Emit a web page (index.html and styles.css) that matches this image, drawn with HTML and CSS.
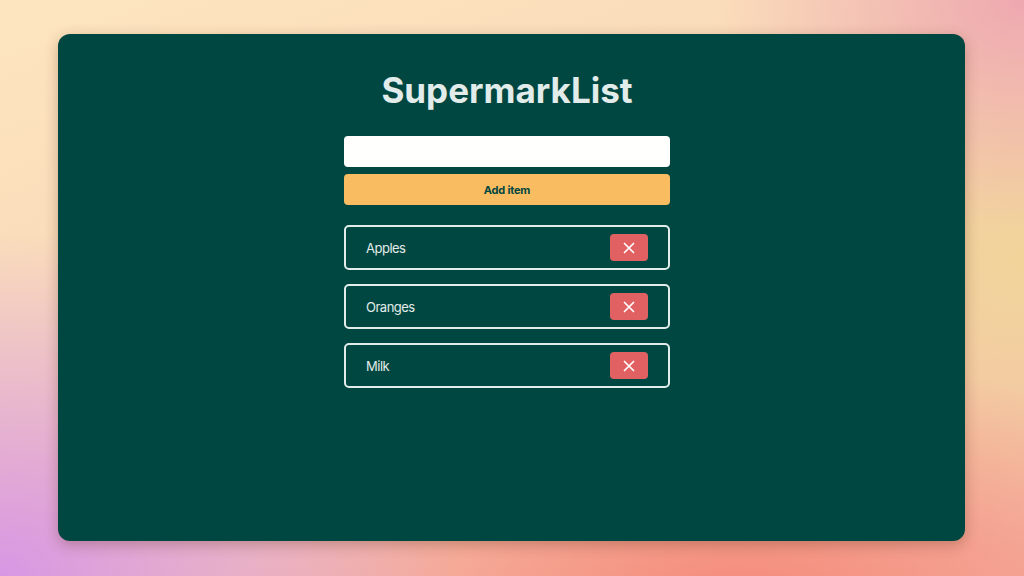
FILE: index.html
```html
<!DOCTYPE html>
<html lang="en">
<head>
<meta charset="utf-8">
<title>SupermarkList</title>
<link rel="stylesheet" href="styles.css">
</head>
<body>
<main class="card">
  <h1 class="title">SupermarkList</h1>
  <form class="add-form">
    <input class="add-input" type="text" aria-label="Item">
    <button class="add-btn" type="button">Add item</button>
  </form>
  <ul class="list">
    <li class="item"><span class="item-name">Apples</span><button class="del-btn" type="button" aria-label="Delete"><svg viewBox="0 0 12 12" width="12" height="12"><path d="M1.5 1.5L10.5 10.5M10.5 1.5L1.5 10.5" stroke="#fff" stroke-width="1.7" stroke-linecap="round"/></svg></button></li>
    <li class="item"><span class="item-name">Oranges</span><button class="del-btn" type="button" aria-label="Delete"><svg viewBox="0 0 12 12" width="12" height="12"><path d="M1.5 1.5L10.5 10.5M10.5 1.5L1.5 10.5" stroke="#fff" stroke-width="1.7" stroke-linecap="round"/></svg></button></li>
    <li class="item"><span class="item-name">Milk</span><button class="del-btn" type="button" aria-label="Delete"><svg viewBox="0 0 12 12" width="12" height="12"><path d="M1.5 1.5L10.5 10.5M10.5 1.5L1.5 10.5" stroke="#fff" stroke-width="1.7" stroke-linecap="round"/></svg></button></li>
  </ul>
</main>
</body>
</html>
```

FILE: styles.css
```css
* { box-sizing: border-box; }
html, body { height: 100%; }
body {
  margin: 0;
  padding: 34px 59px 35px 58px;
  font-family: Inter, "Noto Sans", sans-serif;
  background:
    radial-gradient(ellipse 45% 60% at 0% 100%, #d897e4 0%, rgba(216,151,228,0) 100%),
    radial-gradient(ellipse 50% 45% at 72% 105%, #f58a7a 0%, rgba(245,138,122,0) 100%),
    radial-gradient(ellipse 30% 40% at 100% 0%, #eea8b0 0%, rgba(238,168,176,0) 100%),
    radial-gradient(ellipse 30% 50% at 100% 45%, #f1d49a 0%, rgba(241,212,154,0) 100%),
    linear-gradient(160deg, #fde6bf 0%, #f9d9b8 40%, #f3b3a4 100%);
}
.card {
  height: 100%;
  background: #014741;
  border-radius: 12px;
  box-shadow: 0 4px 14px rgba(90, 40, 20, 0.3);
  display: flex;
  flex-direction: column;
  align-items: center;
  padding: 34px 9px 0 0;
}
.title {
  margin: 0;
  font-size: 35px;
  line-height: 44px;
  font-weight: 700;
  color: #e2ecea;
}
.add-form {
  width: 326px;
  margin-top: 24px;
  display: flex;
  flex-direction: column;
  gap: 7px;
}
.add-input {
  height: 31px;
  border: none;
  border-radius: 4px;
  background: #fffffe;
  padding: 0 10px;
  font: inherit;
}
.add-btn {
  height: 31px;
  border: none;
  border-radius: 4px;
  background: #f9bc60;
  color: #014741;
  font-family: inherit;
  font-size: 11px;
  letter-spacing: -0.2px;
  font-weight: 700;
  padding: 0;
}
.list {
  list-style: none;
  margin: 20px 0 0;
  padding: 0;
  width: 326px;
  display: flex;
  flex-direction: column;
  gap: 14px;
}
.item {
  height: 45px;
  border: 2px solid #e2ecea;
  border-radius: 5px;
  display: flex;
  align-items: center;
  justify-content: space-between;
  padding: 0 20px;
}
.item-name {
  color: #e2ecea;
  font-size: 13px;
  letter-spacing: -0.5px;
}
.del-btn {
  width: 38px;
  height: 27px;
  border: none;
  border-radius: 4px;
  background: #e16162;
  display: flex;
  align-items: center;
  justify-content: center;
  padding: 0;
}
.del-btn svg { display: block; }
```
